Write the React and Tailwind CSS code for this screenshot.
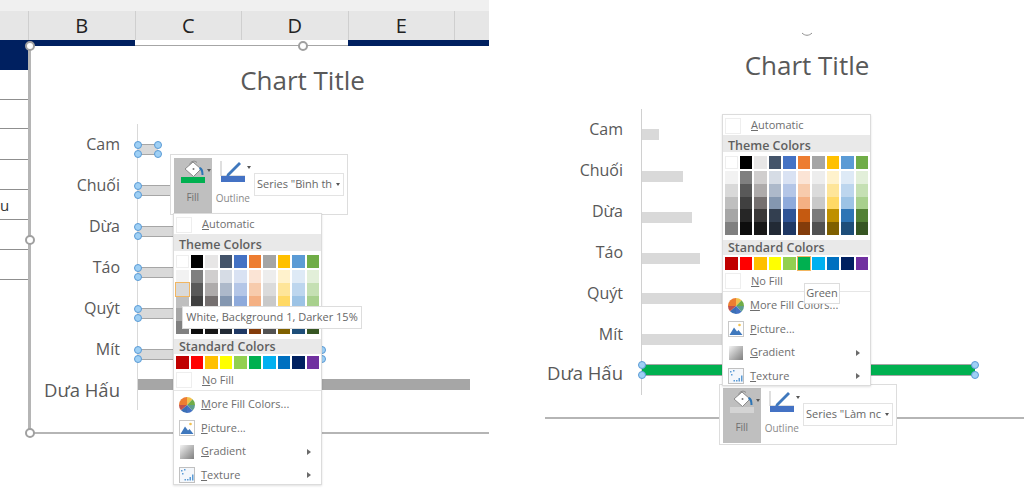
const FONT = "font-['Open_Sans','Noto_Sans',sans-serif]";

const THEME_TOP = [
  "bg-[#ffffff] border border-[#eeeeee]", "bg-[#000000]", "bg-[#e7e6e6]", "bg-[#44546a]", "bg-[#4472c4]",
  "bg-[#ed7d31]", "bg-[#a5a5a5]", "bg-[#ffc000]", "bg-[#5b9bd5]", "bg-[#70ad47]",
];

const THEME_SHADES = [
  ["bg-[#f2f2f2]", "bg-[#d9d9d9]", "bg-[#bfbfbf]", "bg-[#a6a6a6]", "bg-[#808080]"],
  ["bg-[#7f7f7f]", "bg-[#595959]", "bg-[#404040]", "bg-[#262626]", "bg-[#0d0d0d]"],
  ["bg-[#d0cece]", "bg-[#aeabab]", "bg-[#757070]", "bg-[#3a3838]", "bg-[#171717]"],
  ["bg-[#d6dce5]", "bg-[#adb9ca]", "bg-[#8497b0]", "bg-[#333f50]", "bg-[#222a35]"],
  ["bg-[#d9e2f3]", "bg-[#b4c6e7]", "bg-[#8eaadb]", "bg-[#2f5496]", "bg-[#1f3864]"],
  ["bg-[#fbe4d5]", "bg-[#f7cbac]", "bg-[#f4b083]", "bg-[#c55a11]", "bg-[#833c0b]"],
  ["bg-[#ededed]", "bg-[#dbdbdb]", "bg-[#c9c9c9]", "bg-[#7b7b7b]", "bg-[#525252]"],
  ["bg-[#fff2cc]", "bg-[#fee599]", "bg-[#ffd965]", "bg-[#bf9000]", "bg-[#7f6000]"],
  ["bg-[#deeaf6]", "bg-[#bdd6ee]", "bg-[#9cc3e5]", "bg-[#2e75b5]", "bg-[#1e4e79]"],
  ["bg-[#e2efd9]", "bg-[#c5e0b3]", "bg-[#a8d08d]", "bg-[#538135]", "bg-[#375623]"],
];

const STANDARD = [
  "bg-[#c00000]", "bg-[#ff0000]", "bg-[#ffc000]", "bg-[#ffff00]", "bg-[#92d050]",
  "bg-[#00b050]", "bg-[#00b0f0]", "bg-[#0070c0]", "bg-[#002060]", "bg-[#7030a0]",
];

const LABELS = ["Cam", "Chuối", "Dừa", "Táo", "Quýt", "Mít"];

function Handle({ className }) {
  return (
    <span className={`absolute w-[8px] h-[8px] rounded-full bg-[#9fd0f5] border border-[#5b9bd5] ${className}`} />
  );
}

function PieIcon() {
  return (
    <svg width="18" height="18" viewBox="0 0 18 18">
      <path d="M9 9V1a8 8 0 0 1 5.6 2.3z" fill="#f2c14e" />
      <path d="M9 9l5.6-5.7A8 8 0 0 1 17 9z" fill="#70ad47" />
      <path d="M9 9h8a8 8 0 0 1-2.4 5.7z" fill="#5f9e8f" />
      <path d="M9 9l5.6 5.7A8 8 0 0 1 9 17z" fill="#4472c4" />
      <path d="M9 9v8a8 8 0 0 1-6-2.7z" fill="#3b6fb5" />
      <path d="M9 9l-6 5.3A8 8 0 0 1 1 9z" fill="#c0504d" />
      <path d="M9 9H1a8 8 0 0 1 8-8z" fill="#ed7d31" />
    </svg>
  );
}

function PictureIcon() {
  return (
    <svg width="16" height="16" viewBox="0 0 16 16">
      <rect x="0.5" y="0.5" width="15" height="15" fill="#fff" stroke="#c8c8c8" />
      <circle cx="11.5" cy="4" r="1.3" fill="#f2c14e" />
      <path d="M1.5 14 6 6.5l3 4 1.5-1.5 4 5z" fill="#3f78bd" />
    </svg>
  );
}

function TextureIcon() {
  return (
    <svg width="16" height="16" viewBox="0 0 16 16">
      <rect x="0.5" y="0.5" width="15" height="15" fill="#f4f7fb" stroke="#c0c0c0" />
      <path d="M2 3h1.5v1.5H2zM5 2h1.5v1.5H5zM3 6h1.5v1.5H3zM8 12h1.5v1.5H8zM10.5 10h1.5v3.5h-1.5zM13 7.5h1.5v6H13zM5.5 12h1.5v1.5H5.5z" fill="#5b9bd5" />
    </svg>
  );
}

function Swatch({ color, selected }) {
  return <div className={`h-[13px] ${color} ${selected ? "outline-1 outline-[#f2b661]" : ""}`} />;
}

function SwatchHeader({ children, className = "" }) {
  return (
    <div className={`bg-[#e9e9e9] pl-[5px] text-[12.5px] font-semibold text-[#5f5f5f] ${className}`}>
      {children}
    </div>
  );
}

function EmptyRow({ children, className = "" }) {
  return (
    <div className={`flex items-center h-[20px] ${className}`}>
      <span className="w-[16px] h-[16px] ml-[2px] border border-[#eeeeee] bg-white" />
      <span className="ml-[10px] text-[11px] text-[#6e6e6e]">{children}</span>
    </div>
  );
}

function MenuRow({ icon, label, arrow }) {
  return (
    <div className="flex items-center h-[23.5px] pl-[4px] pr-[10px]">
      <span className="w-[18px] flex justify-center">{icon}</span>
      <span className="ml-[5px] flex-1 text-[11px] text-[#6e6e6e]">{label}</span>
      {arrow && <span className="w-0 h-0 border-y-[3.5px] border-y-transparent border-l-[4px] border-l-[#6a6a6a]" />}
    </div>
  );
}

function FillMenu({ className, selectedShade, selectedStandard }) {
  return (
    <div className={`absolute z-20 w-[149px] h-[272px] bg-white border border-[#dcdcdc] shadow-[0_1px_2px_rgba(0,0,0,0.12)] ${FONT} ${className}`}>
      <EmptyRow className="pt-[1px]">
        <u>A</u>utomatic
      </EmptyRow>
      <SwatchHeader className="h-[17px] leading-[21px]">Theme Colors</SwatchHeader>
      <div className="grid grid-cols-10 gap-x-[2px] w-[143px] ml-[2px] mt-[4px]">
        {THEME_TOP.map((c) => (
          <Swatch key={c} color={c} />
        ))}
      </div>
      <div className="grid grid-cols-10 gap-x-[2px] w-[143px] ml-[2px] mt-[2px]">
        {THEME_SHADES.map((col, i) => (
          <div key={i} className="flex flex-col">
            {col.map((c, j) => (
              <div
                key={c}
                className={`h-[12.8px] ${c} ${selectedShade && i === 0 && j === 1 ? "outline-1 outline-[#f2b661] z-10" : ""}`}
              />
            ))}
          </div>
        ))}
      </div>
      <SwatchHeader className="h-[15px] leading-[15px] mt-[5px]">Standard Colors</SwatchHeader>
      <div className="grid grid-cols-10 gap-x-[2px] w-[143px] ml-[2px] mt-[2px]">
        {STANDARD.map((c, i) => (
          <Swatch key={c} color={c} selected={selectedStandard && i === 5} />
        ))}
      </div>
      <EmptyRow className="mt-[2px] border-b border-[#e6e6e6]">
        <u>N</u>o Fill
      </EmptyRow>
      <div className="pt-[2px]">
        <MenuRow icon={<PieIcon />} label={<><u>M</u>ore Fill Colors...</>} />
        <MenuRow icon={<PictureIcon />} label={<><u>P</u>icture...</>} />
        <MenuRow
          icon={<span className="block w-[14px] h-[14px] bg-gradient-to-br from-[#f4f4f4] to-[#7f7f7f]" />}
          label={<><u>G</u>radient</>}
          arrow
        />
        <MenuRow icon={<TextureIcon />} label={<><u>T</u>exture</>} arrow />
      </div>
    </div>
  );
}

function Caret({ className = "" }) {
  return <span className={`w-0 h-0 border-x-[2.5px] border-x-transparent border-t-[3px] border-t-[#555555] ${className}`} />;
}

function FormatBar({ className, fillBar, series }) {
  return (
    <div className={`absolute z-10 flex w-[178px] h-[61px] p-[3px] bg-white border border-[#dddddd] ${FONT} ${className}`}>
      <div className="relative flex flex-col items-center w-[38px] h-[55px] bg-[#bfbfbf]">
        <svg width="30" height="24" viewBox="0 0 30 24" className="mt-[1px]">
          <path d="M12 7c-1-4 4-6.5 7-3.5" fill="none" stroke="#8a8a8a" />
          <path d="M7 10 15 3l8 7-7.500 7.500z" fill="#fff" stroke="#8a8a8a" />
          <path d="M22 8c2.500 1 3.500 3 3.500 8h-2c0-3-.5-5-2.500-6z" fill="#2e75b5" />
          <circle cx="15.500" cy="10" r="1" fill="#777" />
        </svg>
        <div className={`w-[24px] h-[6px] -mt-[6px] ${fillBar}`} />
        <Caret className="absolute top-[11px] right-[1px]" />
        <span className="mt-[8px] text-[10px] leading-[13px] text-[#6f6f6f]">Fill</span>
      </div>
      <div className="relative flex flex-col items-center w-[41px] h-[55px] ml-[1px]">
        <svg width="26" height="24" viewBox="0 0 26 24" className="mt-[1px]">
          <path d="M1 2v15h24" fill="none" stroke="#bfbfbf" />
          <path d="M7 15 19 3l2 2L9 17l-3 1z" fill="#3f78bd" />
          <rect x="1" y="17" width="24" height="6" fill="#4472c4" />
        </svg>
        <Caret className="absolute top-[8px] right-[2px]" />
        <span className="mt-[9px] text-[10px] leading-[13px] text-[#8a8a8a]">Outline</span>
      </div>
      <div className="flex items-center w-[91px] h-[23px] mt-[15px] ml-[1px] pl-[2px] pr-[3px] border border-[#e3e3e3] text-[11px] text-[#666666]">
        <span className="flex-1 overflow-hidden whitespace-nowrap">{series}</span>
        <Caret className="ml-[3px] shrink-0" />
      </div>
    </div>
  );
}

function Tip({ className, children }) {
  return (
    <div className={`absolute z-30 flex items-center justify-center bg-white border border-[#dddddd] text-[11px] text-[#666666] whitespace-nowrap ${FONT} ${className}`}>
      {children}
    </div>
  );
}

function LabelColumn({ className, lastClass }) {
  return (
    <div className={`flex flex-col items-end -mt-[1px] text-[#595959] ${FONT} ${className}`}>
      {LABELS.map((l) => (
        <div key={l} className="flex items-center h-[41px] text-[16px]">{l}</div>
      ))}
      <div className={`flex items-center h-[41px] text-[18.500px] whitespace-nowrap ${lastClass}`}>Dưa Hấu</div>
    </div>
  );
}

function LeftBar({ className, both }) {
  return (
    <div className={`relative h-[11px] bg-[#d9d9d9] border-y border-[#a6a6a6] ${className}`}>
      <Handle className="-left-[4px] -top-[4px]" />
      <Handle className="-left-[4px] -bottom-[4px]" />
      {both && <Handle className="-right-[4px] -top-[4px]" />}
      {both && <Handle className="-right-[4px] -bottom-[4px]" />}
    </div>
  );
}

function LeftPanel() {
  return (
    <div className="relative w-[489px] h-[489px] shrink-0 overflow-hidden bg-white">
      <div className="h-[11px] bg-[#f0f0f0]" />
      <div className={`flex h-[29px] pl-[28px] bg-[#e6e6e6] text-[20px] leading-[29px] text-[#222222] ${FONT}`}>
        {["B", "C", "D", "E", ""].map((c, i) => (
          <div key={i} className="w-[106.500px] shrink-0 text-center border-l border-[#cfcfcf]">{c}</div>
        ))}
      </div>
      <div className="flex h-[6px]">
        <div className="w-[135px] bg-[#002060]" />
        <div className="w-[213px] bg-white border-b border-[#a6a6a6]" />
        <div className="flex-1 bg-[#002060]" />
      </div>
      <div className="flex">
        <div className="w-[28px] shrink-0">
          <div className="h-[24px] bg-[#002060]" />
          <div className="h-[30px] border-b border-[#8f8f8f]" />
          <div className="h-[29px] border-b border-[#8f8f8f]" />
          <div className="h-[31px] border-b border-[#8f8f8f]" />
          <div className="h-[30px] border-b border-[#8f8f8f]" />
          <div className={`h-[30px] border-b border-[#8f8f8f] overflow-hidden text-[15px] leading-[30px] text-[#333333] ${FONT}`}>u</div>
          <div className="h-[30px] border-b border-[#8f8f8f]" />
          <div className="h-[30px] border-b border-[#8f8f8f]" />
        </div>
        <div className="relative w-[550px] shrink-0 h-[388px] border-l-[3px] border-b-2 border-[#b5b5b5]">
          <div className={`h-[78px] pt-[17px] pr-[4px] text-center text-[26px] leading-[35px] text-[#595959] ${FONT}`}>
            Chart Title
          </div>
          <div className="flex">
            <LabelColumn className="w-[89px]" lastClass="" />
            <div className="ml-[17px] h-[286px] pt-[20px] border-l border-[#d9d9d9]">
              <LeftBar className="w-[20px]" both />
              <LeftBar className="w-[60px] mt-[30px]" />
              <LeftBar className="w-[70px] mt-[30px]" />
              <LeftBar className="w-[80px] mt-[30px]" />
              <LeftBar className="w-[120px] mt-[30px]" />
              <LeftBar className="w-[184px] mt-[30px]" both />
              <div className="h-[11px] w-[332px] mt-[19px] bg-[#a6a6a6]" />
            </div>
          </div>
        </div>
      </div>
      <span className="absolute left-[25px] top-[41px] z-10 w-[10px] h-[10px] rounded-full bg-white border-2 border-[#a0a0a0]" />
      <span className="absolute left-[298px] top-[41px] z-10 w-[10px] h-[10px] rounded-full bg-white border-2 border-[#a0a0a0]" />
      <span className="absolute left-[25px] top-[235px] z-10 w-[10px] h-[10px] rounded-full bg-white border-2 border-[#a0a0a0]" />
      <span className="absolute left-[25px] top-[428px] z-10 w-[10px] h-[10px] rounded-full bg-white border-2 border-[#a0a0a0]" />

      <FormatBar className="left-[170px] top-[154px]" fillBar="bg-[#00b050]" series={'Series "Bình th'} />
      <FillMenu className="left-[173px] top-[213px]" selectedShade />
      <Tip className="left-[182px] top-[306px] w-[180px] h-[23px]">White, Background 1, Darker 15%</Tip>
    </div>
  );
}

function RightPanel() {
  return (
    <div className="relative flex-1 h-[489px] overflow-hidden bg-white">
      <svg width="12" height="5" viewBox="0 0 12 5" className="absolute left-[256px] top-[32px]">
        <path d="M1 1c3 3 7 3 10 0" fill="none" stroke="#8f8f8f" />
      </svg>
      <div className="w-[524px] h-[419px] border-b-2 border-[#b5b5b5]">
        <div className={`h-[109px] pt-[48px] text-center text-[26px] leading-[35px] text-[#595959] ${FONT}`}>
          Chart Title
        </div>
        <div className="flex">
          <LabelColumn className="w-[78px]" lastClass="-mt-[2px]" />
          <div className="ml-[18px] h-[286px] pt-[20px] border-l border-[#d0d0d0]">
            <div className="h-[11px] w-[17px] bg-[#d9d9d9]" />
            <div className="h-[11px] w-[41px] mt-[31px] bg-[#d9d9d9]" />
            <div className="h-[11px] w-[50px] mt-[30px] bg-[#d9d9d9]" />
            <div className="h-[11px] w-[58px] mt-[30px] bg-[#d9d9d9]" />
            <div className="h-[11px] w-[120px] mt-[29px] bg-[#d9d9d9]" />
            <div className="h-[11px] w-[180px] mt-[30px] bg-[#d9d9d9]" />
            <div className="relative h-[12px] w-[333px] mt-[19px] bg-[#00b050] border-y border-[#a6a6a6]">
              <Handle className="-left-[4px] -top-[4px]" />
              <Handle className="-left-[4px] -bottom-[4px]" />
              <Handle className="-right-[4px] -top-[4px]" />
              <Handle className="-right-[4px] -bottom-[4px]" />
            </div>
          </div>
        </div>
      </div>
      <FormatBar className="left-[174px] top-[384px]" fillBar="bg-[#d4d4d4]" series={'Series "Làm nc'} />
      <FillMenu className="left-[177px] top-[114px]" selectedStandard />
      <Tip className="left-[259px] top-[283px] w-[36px] h-[21px]">Green</Tip>
    </div>
  );
}

export default function App() {
  return (
    <div className="flex w-[1024px] h-[489px] overflow-hidden bg-white">
      <LeftPanel />
      <div className="w-[56px] shrink-0" />
      <RightPanel />
    </div>
  );
}
